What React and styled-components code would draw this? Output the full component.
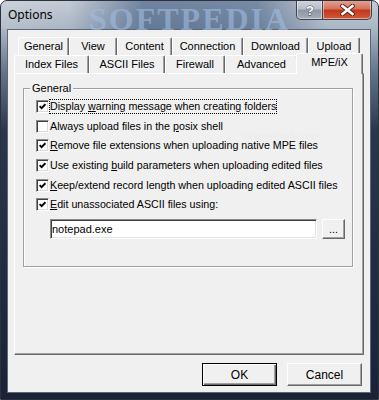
import React from 'react';
import styled, { createGlobalStyle } from 'styled-components';

const GlobalStyle = createGlobalStyle`
  html, body {
    margin: 0;
    padding: 0;
    background: #ffffff;
  }
  body {
    font-family: "Liberation Sans", Arial, sans-serif;
    font-size: 11px;
    color: #000;
  }
`;

const Window = styled.div`
  position: relative;
  box-sizing: border-box;
  width: 379px;
  height: 400px;
  display: flex;
  flex-direction: column;
  border: 1px solid #2a3240;
  border-radius: 7px 7px 0 0;
  overflow: hidden;
  background: linear-gradient(
    180deg,
    #c3cbd5 0px,
    #aab6c4 28px,
    #66758a 70px,
    #2a364c 130px,
    #1a2336 100%
  );
`;

const TitleBar = styled.div`
  position: relative;
  height: 28px;
  display: flex;
  align-items: flex-start;
  background: linear-gradient(
    90deg,
    rgba(255, 255, 255, 0.12) 0%,
    rgba(255, 255, 255, 0) 18%,
    rgba(30, 60, 105, 0.5) 38%,
    rgba(30, 60, 105, 0.45) 68%,
    rgba(255, 255, 255, 0) 86%
  );
`;

const Title = styled.div`
  font-family: "Noto Sans", "Open Sans", sans-serif;
  font-size: 12px;
  line-height: 16px;
  padding: 6px 0 0 7px;
  color: #000;
  z-index: 1;
`;

const TitleMark = styled.div`
  position: absolute;
  left: 88px;
  top: 0px;
  font-family: "Liberation Serif", serif;
  font-weight: bold;
  font-size: 32px;
  letter-spacing: 2px;
  color: rgba(160, 188, 225, 0.6);
  pointer-events: none;
`;

const CaptionButtons = styled.div`
  display: flex;
  margin-left: auto;
  margin-right: 6px;
  z-index: 1;
`;

const CaptionButton = styled.div`
  box-sizing: border-box;
  width: ${p => p.$w}px;
  height: 20px;
  margin-top: -1px;
  display: flex;
  align-items: center;
  justify-content: center;
  border: 1px solid #3c4452;
  border-top: none;
  border-left: ${p => (p.$close ? 'none' : '1px solid #3c4452')};
  border-radius: ${p => (p.$close ? '0 0 5px 0' : '0 0 0 5px')};
  background: ${p =>
    p.$close
      ? 'linear-gradient(180deg, #e6a595 0%, #d27560 45%, #c2381c 55%, #d45a3a 100%)'
      : 'linear-gradient(180deg, #d3d8de 0%, #b6bec8 45%, #8e98a5 55%, #a4adb8 100%)'};
  box-shadow: inset 0 0 0 1px rgba(255, 255, 255, 0.45);
`;

const Client = styled.div`
  flex: 1;
  margin: 0 7px 6px 6px;
  border: 1px solid #5c687a;
  background: #f0f0f0;
  display: flex;
  flex-direction: column;
  padding: 7px 7px 0 6px;
`;

const TabControl = styled.div`
  display: flex;
  flex-direction: column;
  width: 350px;
`;

const TabRow = styled.div`
  display: flex;
  align-items: flex-end;
  height: 18px;
  padding-left: ${p => p.$indent}px;
`;

const Tab = styled.div`
  box-sizing: border-box;
  width: ${p => p.$w}px;
  height: ${p => (p.$active ? 21 : 18)}px;
  margin-bottom: ${p => (p.$active ? -1 : 0)}px;
  margin-left: ${p => (p.$active ? -2 : 0)}px;
  padding-bottom: ${p => (p.$active ? 4 : 1)}px;
  display: flex;
  align-items: center;
  justify-content: center;
  background: #f0f0f0;
  border-top: 1px solid #ffffff;
  border-left: 1px solid #ffffff;
  border-right: 1px solid #696969;
  border-radius: 2px 2px 0 0;
  box-shadow: inset -1px 0 #a0a0a0;
  white-space: nowrap;
  z-index: ${p => (p.$active ? 2 : 1)};
`;

const Panel = styled.div`
  position: relative;
  box-sizing: border-box;
  height: 282px;
  border: 1px solid;
  border-color: #ffffff #696969 #696969 #ffffff;
  box-shadow: inset -1px -1px #a0a0a0;
  padding: 14px 0 0 8px;
`;

const Group = styled.div`
  position: relative;
  box-sizing: border-box;
  width: 330px;
  height: 179px;
  border: 1px solid #a0a0a0;
  box-shadow: inset 1px 1px #ffffff, 1px 1px #ffffff;
  padding: 8px 0 0 12px;
  font-size: 10.7px;
`;

const Legend = styled.div`
  position: absolute;
  left: 6px;
  top: -8px;
  padding: 0 2px;
  line-height: 14px;
  font-size: 11px;
  background: #f0f0f0;
`;

const CheckRow = styled.div`
  display: flex;
  align-items: center;
  height: 19.6px;
`;

const Box = styled.div`
  box-sizing: border-box;
  width: 13px;
  height: 13px;
  display: flex;
  align-items: center;
  justify-content: center;
  background: #ffffff;
  border: 1px solid;
  border-color: #8a8a8a #ffffff #ffffff #8a8a8a;
  box-shadow: inset 1px 1px #404040, inset -1px -1px #dcdcdc;
`;

const Label = styled.span`
  padding: 0;
  line-height: 13px;
  border: 1px dotted ${p => (p.$focus ? '#000' : 'transparent')};
  white-space: nowrap;
`;

const U = styled.span`
  text-decoration: underline;
`;

const FileRow = styled.div`
  display: flex;
  gap: 5px;
  margin-top: 4px;
  padding-left: 14px;
`;

const TextField = styled.input`
  box-sizing: border-box;
  width: 267px;
  height: 20px;
  margin: 0;
  padding: 0 1px;
  font-family: "Liberation Sans", Arial, sans-serif;
  font-size: 11px;
  color: #000;
  background: #ffffff;
  border: 1px solid;
  border-color: #8a8a8a #ffffff #ffffff #8a8a8a;
  box-shadow: inset 1px 1px #404040, inset -1px -1px #e3e3e3;
  outline: none;
`;

const RaisedButton = styled.div`
  box-sizing: border-box;
  width: ${p => p.$w}px;
  height: ${p => p.$h}px;
  display: flex;
  align-items: ${p => (p.$low ? 'flex-end' : 'center')};
  justify-content: center;
  padding-bottom: ${p => (p.$low ? 3 : 0)}px;
  font-size: ${p => p.$fs || 11}px;
  background: #f0f0f0;
  border: 1px solid;
  border-color: ${p =>
    p.$default ? '#000 #000 #000 #000' : '#ffffff #696969 #696969 #ffffff'};
  box-shadow: ${p =>
    p.$default
      ? 'inset 1px 1px #ffffff, inset -1px -1px #696969, inset -2px -2px #a0a0a0'
      : 'inset -1px -1px #a0a0a0'};
`;

const ButtonBar = styled.div`
  display: flex;
  justify-content: flex-end;
  gap: 10px;
  margin-top: 8px;
  padding-right: 1px;
`;

const Watermark = styled.div`
  position: absolute;
  left: ${p => p.$x}px;
  top: ${p => p.$y}px;
  font-family: "Liberation Sans", sans-serif;
  font-size: ${p => p.$size}px;
  color: rgba(255, 255, 255, 0.7);
  text-shadow: 0 0 1px rgba(160, 160, 160, 0.3);
  pointer-events: none;
  white-space: nowrap;
`;

const Check = () => (
  <svg width="7" height="7" viewBox="0 0 7 7">
    <polyline points="0.6,3.2 2.6,5.2 6.4,1.2" fill="none" stroke="#000" strokeWidth="1.8" />
  </svg>
);

const HelpGlyph = () => (
  <svg width="12" height="13" viewBox="0 0 12 13">
    <text
      x="6"
      y="11.5"
      textAnchor="middle"
      fontFamily="Liberation Sans, Arial, sans-serif"
      fontWeight="bold"
      fontSize="13"
      fill="#fff"
      stroke="#3a3f48"
      strokeWidth="0.8"
      paintOrder="stroke"
    >
      ?
    </text>
  </svg>
);

const CloseGlyph = () => (
  <svg width="15" height="12" viewBox="0 0 15 12">
    <path d="M2.5 2 L12.5 10 M12.5 2 L2.5 10" stroke="#5a2014" strokeWidth="4.4" strokeLinecap="square" />
    <path d="M2.5 2 L12.5 10 M12.5 2 L2.5 10" stroke="#ffffff" strokeWidth="2.6" strokeLinecap="square" />
  </svg>
);

const backTabs = [
  { label: 'General', w: 51 },
  { label: 'View', w: 48 },
  { label: 'Content', w: 55 },
  { label: 'Connection', w: 71 },
  { label: 'Download', w: 65 },
  { label: 'Upload', w: 52 },
];

const frontTabs = [
  { label: 'Index Files', w: 75 },
  { label: 'ASCII Files', w: 76 },
  { label: 'Firewall', w: 60 },
  { label: 'Advanced', w: 73 },
  { label: 'MPE/iX', w: 67, active: true },
];

const options = [
  { checked: true, focus: true, text: <>Display <U>w</U>arning message when creating folders</> },
  { checked: false, text: <>Always upload files in the <U>p</U>osix shell</> },
  { checked: true, text: <><U>R</U>emove file extensions when uploading native MPE files</> },
  { checked: true, text: <>Use existing <U>b</U>uild parameters when uploading edited files</> },
  { checked: true, text: <><U>K</U>eep/extend record length when uploading edited ASCII files</> },
  { checked: true, text: <><U>E</U>dit unassociated ASCII files using:</> },
];

export default function App() {
  return (
    <>
      <GlobalStyle />
      <Window>
        <TitleBar>
          <TitleMark>SOFTPEDIA</TitleMark>
          <Title>Options</Title>
          <CaptionButtons>
            <CaptionButton $w={27}>
              <HelpGlyph />
            </CaptionButton>
            <CaptionButton $w={49} $close>
              <CloseGlyph />
            </CaptionButton>
          </CaptionButtons>
        </TitleBar>
        <Client>
          <TabControl>
            <TabRow $indent={4}>
              {backTabs.map(t => (
                <Tab key={t.label} $w={t.w}>
                  {t.label}
                </Tab>
              ))}
            </TabRow>
            <TabRow $indent={0}>
              {frontTabs.map(t => (
                <Tab key={t.label} $w={t.w} $active={t.active}>
                  {t.label}
                </Tab>
              ))}
            </TabRow>
            <Panel>
              <Group>
                <Legend>General</Legend>
                {options.map((o, i) => (
                  <CheckRow key={i}>
                    <Box>{o.checked && <Check />}</Box>
                    <Label $focus={o.focus}>{o.text}</Label>
                  </CheckRow>
                ))}
                <FileRow>
                  <TextField readOnly value="notepad.exe" />
                  <RaisedButton $w={23} $h={20} $low>
                    ...
                  </RaisedButton>
                </FileRow>
              </Group>
              <Watermark $x={227} $y={57} $size={9}>
                www.softpedia.com
              </Watermark>
            </Panel>
          </TabControl>
          <ButtonBar>
            <RaisedButton $w={75} $h={23} $default $fs={12}>
              OK
            </RaisedButton>
            <RaisedButton $w={75} $h={23} $fs={12}>
              Cancel
            </RaisedButton>
          </ButtonBar>
        </Client>
      </Window>
    </>
  );
}
